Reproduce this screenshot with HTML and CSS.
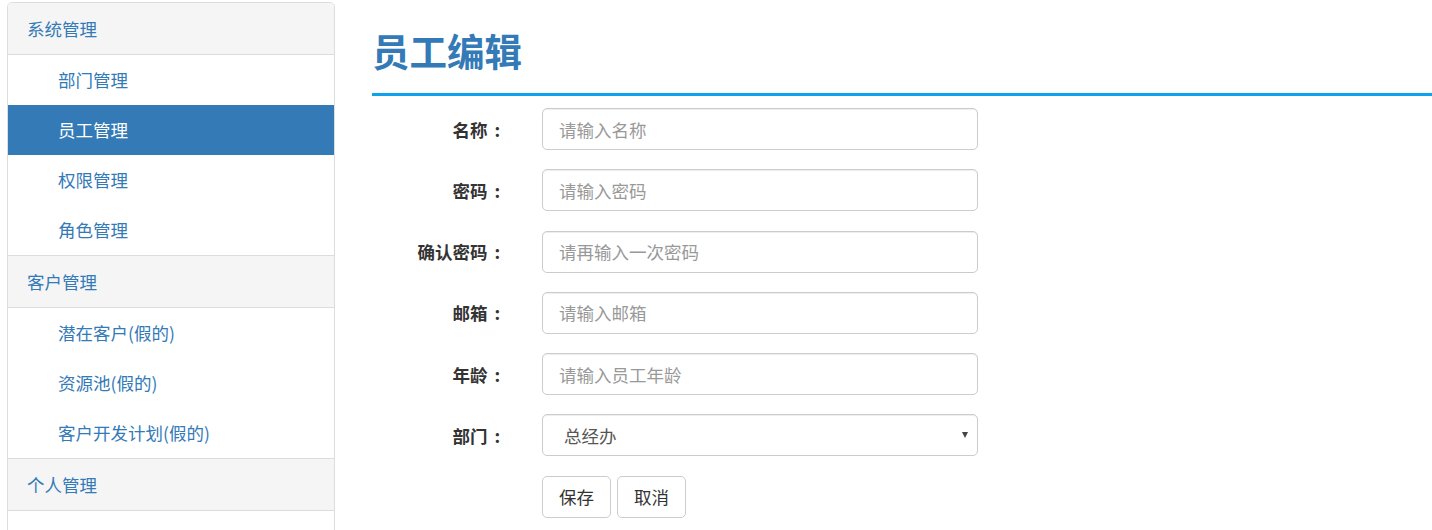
FILE: index.html
```html
<!DOCTYPE html>
<html lang="zh-CN">
<head>
<meta charset="utf-8">
<title>员工编辑</title>
<link rel="stylesheet" href="styles.css">
</head>
<body>
<div class="page">
  <aside class="sidebar">
    <div class="section first">
      <div class="sec-head">系统管理</div>
      <div class="item">部门管理</div>
      <div class="item active">员工管理</div>
      <div class="item">权限管理</div>
      <div class="item">角色管理</div>
    </div>
    <div class="section">
      <div class="sec-head">客户管理</div>
      <div class="item">潜在客户(假的)</div>
      <div class="item">资源池(假的)</div>
      <div class="item">客户开发计划(假的)</div>
    </div>
    <div class="section">
      <div class="sec-head">个人管理</div>
      <div class="item"></div>
    </div>
  </aside>
  <main class="main">
    <h2 class="title">员工编辑</h2>
    <form class="form">
      <div class="row">
        <label class="lbl">名称<span class="colon">:</span></label>
        <input class="ctl" type="text" placeholder="请输入名称">
      </div>
      <div class="row">
        <label class="lbl">密码<span class="colon">:</span></label>
        <input class="ctl" type="password" placeholder="请输入密码">
      </div>
      <div class="row">
        <label class="lbl">确认密码<span class="colon">:</span></label>
        <input class="ctl" type="password" placeholder="请再输入一次密码">
      </div>
      <div class="row">
        <label class="lbl">邮箱<span class="colon">:</span></label>
        <input class="ctl" type="text" placeholder="请输入邮箱">
      </div>
      <div class="row">
        <label class="lbl">年龄<span class="colon">:</span></label>
        <input class="ctl" type="text" placeholder="请输入员工年龄">
      </div>
      <div class="row">
        <label class="lbl">部门<span class="colon">:</span></label>
        <div class="select-wrap">
          <select class="ctl sel">
            <option>总经办</option>
          </select>
        </div>
      </div>
      <div class="row btns">
        <span class="lbl"></span>
        <button type="button" class="btn">保存</button>
        <button type="button" class="btn">取消</button>
      </div>
    </form>
  </main>
</div>
</body>
</html>
```
FILE: styles.css
```css
* { box-sizing: border-box; }
html, body { margin: 0; padding: 0; background: #fff; }
body {
  font-family: "Noto Sans CJK SC", "Noto Sans", "Liberation Sans", sans-serif;
  font-size: 17.5px;
  color: #333;
  overflow: hidden;
}
.page {
  display: flex;
  align-items: flex-start;
  padding: 2px 0 0 7px;
  gap: 37px;
}
.sidebar {
  width: 328px;
  flex: none;
  border: 1px solid #ddd;
  border-radius: 5px;
  overflow: hidden;
}
.section { border-top: 1px solid #ddd; }
.section.first { border-top: none; }
.sec-head {
  height: 52px;
  line-height: 51px;
  padding-left: 19px;
  background: #f5f5f5;
  border-bottom: 1px solid #ddd;
  color: #337ab7;
}
.item {
  height: 50px;
  line-height: 50px;
  padding-left: 50px;
  color: #337ab7;
}
.item.active {
  background: #337ab7;
  color: #fff;
}
.main {
  flex: 1;
  min-width: 0;
}
.title {
  margin: 0;
  padding-top: 27px;
  padding-bottom: 22px;
  height: 94px;
  line-height: 42px;
  font-size: 37.5px;
  font-weight: 700;
  color: #337ab7;
  border-bottom: 3px solid #0ea2ec;
}
.form { padding-top: 12px; }
.row {
  display: flex;
  align-items: center;
  margin-bottom: 19.3px;
}
.lbl {
  width: 133px;
  text-align: right;
  font-weight: 700;
  color: #333;
  margin-right: 37px;
  flex: none;
}
.colon {
  display: inline-block;
  width: 17.5px;
  text-align: center;
  padding-left: 2px;
}
.ctl {
  width: 436px;
  height: 42px;
  border: 1px solid #ccc;
  border-radius: 5px;
  padding: 0 16px;
  font-family: inherit;
  font-size: 17.5px;
  color: #555;
  background: #fff;
  box-shadow: inset 0 1px 1px rgba(0,0,0,.075);
  outline: none;
}
.ctl::placeholder { color: #999; }
.select-wrap { position: relative; }
.sel {
  appearance: none;
  -webkit-appearance: none;
  padding-left: 21px;
}
.select-wrap::after {
  content: "";
  position: absolute;
  right: 10px;
  top: 18px;
  border-left: 3.5px solid transparent;
  border-right: 3.5px solid transparent;
  border-top: 6px solid #444;
}
.btn {
  height: 42px;
  padding: 0 16px;
  margin-right: 6px;
  border: 1px solid #ccc;
  border-radius: 5px;
  background: #fff;
  color: #333;
  font-family: inherit;
  font-size: 17.5px;
}
```
